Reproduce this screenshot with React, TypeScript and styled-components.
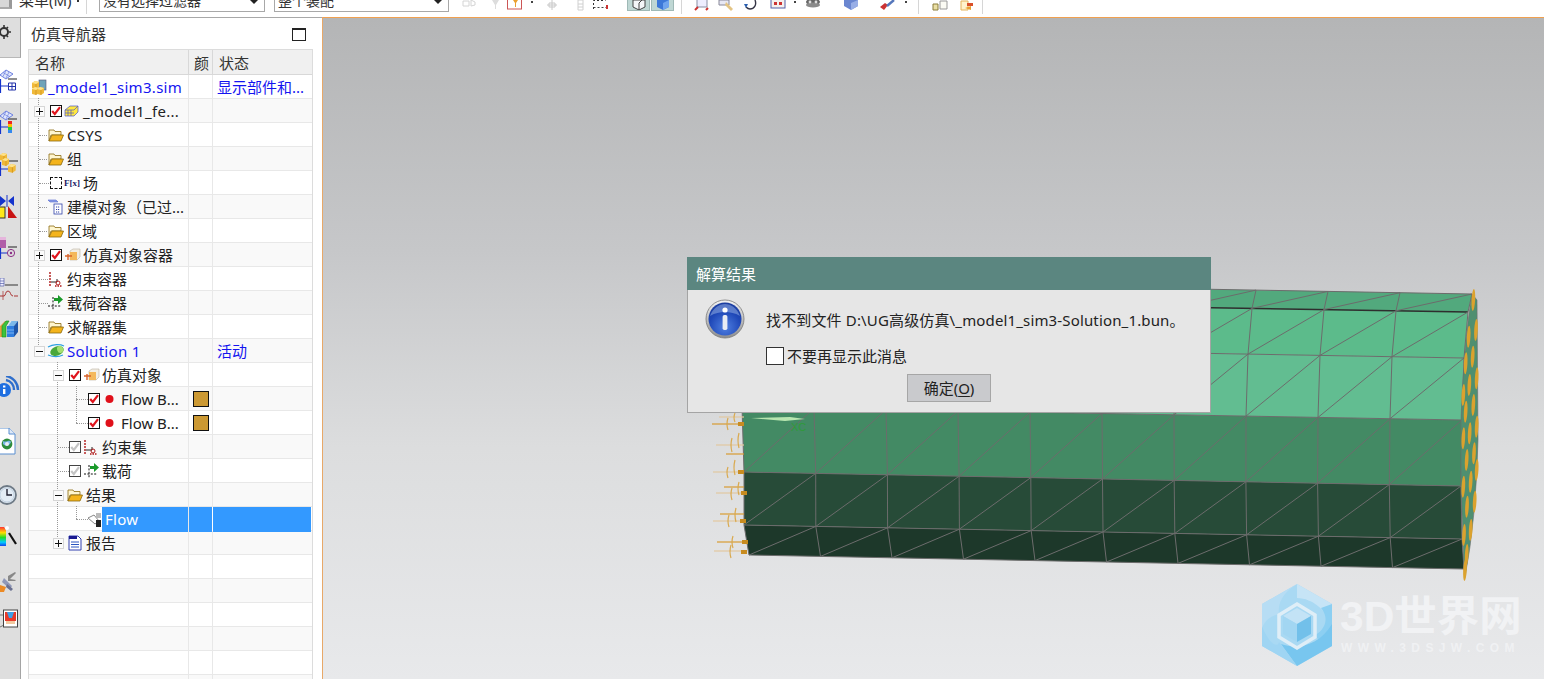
import React from 'react';
import styled, { createGlobalStyle } from 'styled-components';

const FONT = `"Noto Sans", "Noto Sans CJK SC", sans-serif`;

const Global = createGlobalStyle`
  html, body { margin: 0; padding: 0; height: 100%; overflow: hidden; background: #fff; }
  #root { height: 100%; }
  * { box-sizing: border-box; }
`;

const Page = styled.div`
  width: 1544px; height: 679px; display: flex; flex-direction: column; overflow: hidden;
  font-family: ${FONT}; font-size: 15px; color: #222;
`;

/* ---------- top toolbar ---------- */
const TopBar = styled.div`
  height: 17px; flex: none; display: flex; align-items: flex-start; background: #fff; overflow: hidden;
`;
const MenuText = styled.span`
  flex: none; width: 58px; margin: -10px 0 0 7px; font-size: 15px; line-height: 20px; white-space: nowrap; color: #333;
`;
const MenuLead = styled.div`
  flex: none; width: 12px; height: 9px; background: #d8d8d8; border-right: 3px solid #999; border-bottom: 2px solid #aaa;
`;
const MenuCaret = styled.span`
  flex: none; width: 2px; height: 2px; background: #333;
`;
const Sep = styled.div<{ $ml: number }>`
  width: 1px; height: 14px; flex: none; margin-left: ${p => p.$ml}px; background: #d6d6d6;
`;
const Select = styled.div<{ $w: number; $ml: number }>`
  position: relative; flex: none; width: ${p => p.$w}px; height: 12px; margin-left: ${p => p.$ml}px;
  border: 1px solid #a8a8a8; border-top: none; overflow: hidden; padding-left: 3px;
  font-size: 14px; line-height: 20px; color: #333;
  & > span { display: block; margin-top: -9px; white-space: nowrap; }
  &::after {
    content: ''; position: absolute; right: 6px; top: 0;
    border: 4px solid transparent; border-top-color: #222; border-bottom: none;
  }
`;
const ToolSvg = styled.svg<{ $ml: number }>`
  flex: none; margin-left: ${p => p.$ml}px; display: block;
`;
const Pressed = styled.div<{ $ml: number }>`
  flex: none; width: 23px; height: 11px; margin-left: ${p => p.$ml}px;
  background: #bfd7d4; border: 1px solid #9fb9b6; border-top: none;
  display: flex; justify-content: center;
`;

const Tool: React.FC<{ ml: number; w?: number; children: React.ReactNode }> = ({ ml, w = 16, children }) => (
  <ToolSvg $ml={ml} width={w} height={11} viewBox={`0 0 ${w} 11`}>{children}</ToolSvg>
);

const Toolbar = () => (
  <TopBar>
    <MenuLead />
    <MenuText>菜单(M)</MenuText>
    <MenuCaret />
    <Sep $ml={7} />
    <Select $w={166} $ml={12}><span>没有选择过滤器</span></Select>
    <Select $w={175} $ml={9}><span>整个装配</span></Select>
    <Tool ml={13}><path d="M1 1h6v5H1zM9 0l4 2v3l-4 1z" fill="none" stroke="#d4d4d4" /></Tool>
    <Tool ml={13} w={9}><path d="M1 0h7L5 5v4H4V5z" fill="#ddd" /></Tool>
    <Tool ml={7}><rect x=".5" y="-2" width="14" height="11" fill="#fff" stroke="#c55" /><path d="M6 0h5L9 3v4H8V3z" fill="#e9a030" /></Tool>
    <Tool ml={8} w={2}><rect y="1" width="2" height="2" fill="#444" /></Tool>
    <Tool ml={13} w={12}><path d="M6 0v10M1 5h10M3 3h6v4H3z" fill="none" stroke="#c8c8c8" /></Tool>
    <Tool ml={19} w={8}><path d="M1 0h5v10H1zM1 4h5M1 7h5" fill="none" stroke="#d0d0d0" /></Tool>
    <Tool ml={8}><path d="M.5 9V.5h12" fill="none" stroke="#333" strokeDasharray="2 2" /><path d="M.5 7.5h13" stroke="#444" strokeDasharray="2 2" /><path d="M13 5h2v4h-2z" fill="#c33" /></Tool>
    <Pressed $ml={18}><svg width="16" height="10" viewBox="0 0 16 10"><path d="M2 0v7l6 3 6-3V0z" fill="#f4f6f8" stroke="#444" /><path d="M8 10V3l3-3" fill="none" stroke="#444" /></svg></Pressed>
    <Pressed $ml={1}><svg width="16" height="10" viewBox="0 0 16 10"><path d="M2 0v7l6 3 6-3V0z" fill="#3d78d8" /><path d="M8 10V3l6-3v7z" fill="#6fa4ee" /></svg></Pressed>
    <Sep $ml={7} />
    <Tool ml={12}><rect x="3" y="-2" width="10" height="9" fill="#eef" stroke="#8a8fa5" /><path d="M1 10l3-3M12 10l2-2" stroke="#c33" strokeWidth="2" /></Tool>
    <Tool ml={8}><path d="M1 0h10v5H1z" fill="#e8e8f4" stroke="#889" /><path d="M8 2l7 7-2 2-6-6z" fill="#e3c484" /></Tool>
    <Tool ml={9}><path d="M12 0c2 5-1 9-5 9-2 0-3-1-4-2" fill="none" stroke="#334" strokeWidth="1.4" /><path d="M1 4l4 0-2 4z" fill="#2a5fb0" /></Tool>
    <Tool ml={11}><rect x="1" y="-1" width="14" height="9" fill="#f5f0ee" stroke="#5561a8" /><rect x="4" y="2" width="3" height="3" fill="#c33" /><rect x="9" y="2" width="3" height="3" fill="#c33" /></Tool>
    <Tool ml={8} w={2}><rect y="1" width="2" height="2" fill="#444" /></Tool>
    <Tool ml={9}><ellipse cx="8" cy="2" rx="7" ry="3.5" fill="#666" /><ellipse cx="8" cy="5" rx="7" ry="2.5" fill="#8a8a8a" /><circle cx="5" cy="2" r="1.4" fill="#ddd" /><circle cx="11" cy="2" r="1.4" fill="#ddd" /></Tool>
    <Tool ml={22}><path d="M1 0v6l7 4 7-4V0z" fill="#6a86d0" /><path d="M8 10V3l7-3v6z" fill="#98aee6" /></Tool>
    <Tool ml={20}><path d="M1 7l4 3 4-5-3-2z" fill="#c33" /><path d="M8 6l7-6" stroke="#5577bb" strokeWidth="2.4" /></Tool>
    <Tool ml={10} w={2}><rect y="1" width="2" height="2" fill="#444" /></Tool>
    <Sep $ml={11} />
    <Tool ml={13}><path d="M1 4h5v6H1z" fill="#eadfa4" stroke="#8a7c3a" /><path d="M8 1h7v8H8z" fill="#fbfbf4" stroke="#999" /></Tool>
    <Tool ml={11}><path d="M2 1h7v9H2z" fill="#fff3cc" stroke="#e3b45a" /><path d="M8 3h6v3H8z" fill="#d9502a" /><path d="M6 8l6-2v4z" fill="#e9a030" /></Tool>
    <Sep $ml={7} />
  </TopBar>
);

/* ---------- main split ---------- */
const Main = styled.div`
  flex: 1; min-height: 0; display: flex;
`;

/* ---------- left rail ---------- */
const Rail = styled.div`
  width: 21px; flex: none; display: flex; flex-direction: column; overflow: hidden;
  border-top: 1px solid #a8a8a8; background: #dedede;
`;
const RailSlot = styled.div<{ $h?: number; $pt?: number; $active?: boolean; $first?: boolean }>`
  flex: ${p => (p.$h ? 'none' : '1')}; height: ${p => (p.$h ? `${p.$h}px` : 'auto')}; padding-top: ${p => p.$pt || 0}px;
  background: ${p => (p.$active ? '#fff' : 'transparent')};
  border-right: 1px solid ${p => (p.$active ? '#fff' : '#a4a4a4')};
  border-bottom: ${p => (p.$first ? '1px solid #b8b8b8' : 'none')};
  overflow: hidden;
  & > svg { display: block; overflow: visible; }
`;
const RI: React.FC<{ children: React.ReactNode }> = ({ children }) => (
  <svg width="20" height="24" viewBox="0 0 20 24">{children}</svg>
);
const Lattice = () => (
  <g>
    <path d="M0 5l6-5 7 4-7 5z" fill="#dfe6fb" stroke="#6d80e0" />
    <path d="M3 2.5l7 4M6 0.5l-3 6M9 2l-3 6" stroke="#6d80e0" strokeWidth=".7" />
  </g>
);
const RailBlue = () => <path d="M0.5 9v14M0 16h8" stroke="#1433cc" strokeWidth="1.2" fill="none" />;
const GoldCube: React.FC<{ x: number; y: number; s?: number }> = ({ x, y, s = 1 }) => (
  <g transform={`translate(${x} ${y}) scale(${s})`}>
    <path d="M0 2l3-2 4 1v5l-3 2-4-1z" fill="#f0b93a" />
    <path d="M0 2l4 1 3-2-4-1z" fill="#ffe38a" />
    <path d="M4 3v5" stroke="#c78812" strokeWidth=".6" />
  </g>
);

const railIcons: React.ReactNode[] = [
  <RI key="g">
    <circle cx="4" cy="12" r="4" fill="none" stroke="#333" strokeWidth="2" />
    <path d="M4 5v3M4 16v3M9 12h2M8 7l-2 2M8 17l-2-2" stroke="#333" strokeWidth="1.6" />
  </RI>,
  <RI key="a"><Lattice /><path d="M8 9h9" stroke="#222" /><RailBlue />
    <path d="M8.5 13h7v7h-7zM8.5 16.5h7M12 13v7" fill="none" stroke="#2233aa" /></RI>,
  <RI key="b"><Lattice /><path d="M8 8h9" stroke="#222" /><RailBlue />
    <rect x="8" y="10" width="4" height="3" fill="#e22" /><rect x="8" y="13" width="4" height="3" fill="#fb0" />
    <rect x="8" y="16" width="4" height="3" fill="#2c4" /><rect x="8" y="19" width="4" height="3" fill="#38e" /></RI>,
  <RI key="c"><GoldCube x={0} y={0} /><GoldCube x={2} y={5} /><path d="M9 8h9" stroke="#222" /><RailBlue />
    <GoldCube x={8} y={11} s={1.1} /></RI>,
  <RI key="d"><path d="M0 1l6 5-6 5zM14 1L8 6l6 5z" fill="#1433cc" /><path d="M7 0v12" stroke="#1433cc" />
    <rect x="-1" y="12" width="6" height="11" fill="#ffe81a" stroke="#333" />
    <path d="M8 23V11l9 12z" fill="#c81414" /></RI>,
  <RI key="e"><path d="M0 2h6v10H0z" fill="#b05ea8" /><path d="M0 1h6v3H0z" fill="#e5b5dc" /><path d="M8 11h9" stroke="#222" />
    <path d="M.5 12v11M0 17h7" stroke="#1433cc" strokeWidth="1.2" />
    <circle cx="11" cy="17" r="3.6" fill="none" stroke="#8b2f86" /><circle cx="11" cy="17" r="1.2" fill="#8b2f86" /></RI>,
  <RI key="f"><path d="M0 0h4v8H0zM0 3h4M0 5.5h4" fill="#eef" stroke="#5560a8" strokeWidth=".7" /><path d="M5 7h13" stroke="#333" />
    <path d="M0 18h4c2 0 1-5 4-5s2 5 5 5M14 18h4" fill="none" stroke="#a33" /><path d="M3 13v9" stroke="#a33" strokeWidth=".7" /></RI>,
  <RI key="h"><path d="M0 6l5-5h1L2 6v11H0z" fill="#e8a040" /><path d="M2 6l4-5h3L6 6v11H2z" fill="#3cc33c" stroke="#1a8a1a" strokeWidth=".6" />
    <path d="M7 6l4-5h2L9 6v11H7z" fill="#f4f4f4" /><path d="M8 6l3.5-5H18l-4 5z" fill="#7bb8ea" /><path d="M7 6h7v11H7z" fill="#2f7ee0" /><path d="M14 6l4-5v11l-4 5z" fill="#1e55a8" /><path d="M7 10h7M7 13h7" stroke="#9cc8f5" strokeWidth=".7" /></RI>,
  <RI key="i"><circle cx="4" cy="14" r="7" fill="#1f6fe0" /><rect x="3" y="13" width="2.4" height="5" fill="#fff" /><rect x="3" y="9.5" width="2.4" height="2" fill="#fff" />
    <path d="M6 4c5 1 8 5 8 10M6 0c7 1 12 7 12 14" fill="none" stroke="#2f6fcc" strokeWidth="2.4" /></RI>,
  <RI key="j"><path d="M-2 0h11l6 6v20H-2z" fill="#fff" stroke="#5b8fd0" /><path d="M9 0v6h6" fill="#dde8f7" stroke="#5b8fd0" />
    <circle cx="7" cy="16" r="5.4" fill="#2e8c3c" /><path d="M3 13c3 2 6-2 8 1-2 5-6 4-8 2z" fill="#7ab8e8" /><circle cx="7" cy="16" r="2" fill="#e9eef5" /></RI>,
  <RI key="k"><circle cx="7" cy="12" r="9" fill="#e3ecf5" stroke="#6e7a86" strokeWidth="1.8" /><path d="M7 6v6h5" fill="none" stroke="#223" strokeWidth="1.4" /><circle cx="7" cy="12" r="7" fill="none" stroke="#a9bdd2" strokeWidth=".6" /></RI>,
  <RI key="l"><defs><linearGradient id="rb" x1="0" y1="0" x2="0" y2="1"><stop offset="0" stopColor="#f33" /><stop offset=".3" stopColor="#fd0" /><stop offset=".55" stopColor="#2d2" /><stop offset=".8" stopColor="#0cf" /><stop offset="1" stopColor="#14e" /></linearGradient></defs>
    <path d="M0 2h4l2 3v16H0z" fill="url(#rb)" /><path d="M9 8l7 11" stroke="#111" strokeWidth="2.2" /><circle cx="7" cy="3" r="2" fill="#fff" /></RI>,
  <RI key="m"><path d="M8 6l7-4 1 1-6 6 6 1-1 1-7 0z" fill="#888" /><path d="M4 8l8 8-2 3-8-7z" fill="#9098b8" /><path d="M0 15l6 2-2 5H0z" fill="#ec8a25" /><path d="M7 14l6 5-2 2-5-4z" fill="#6a7090" /></RI>,
  <RI key="n"><path d="M0 7h4M0 19l4-2" stroke="#777" /><rect x="3.5" y="2" width="14" height="17" fill="#fff" stroke="#444" />
    <rect x="5" y="4" width="11" height="9" fill="#e83a2a" /><path d="M7 4h7l-2 6H9z" fill="#3aa0e8" /><rect x="6" y="13" width="9" height="3" fill="#f2c9a0" /></RI>,
];
const railSlots: { h?: number; pt?: number; active?: boolean; first?: boolean }[] = [
  { h: 40, pt: 2, first: true }, { h: 45, pt: 12, active: true }, { h: 50, pt: 8 }, { h: 42 }, { h: 41 }, { h: 42 },
  { h: 42 }, { h: 56 }, { h: 52 }, { h: 55 }, { h: 42 }, { h: 45 }, { h: 38 }, {},
];

/* ---------- navigator ---------- */
const Nav = styled.div`
  width: 301px; flex: none; display: flex; flex-direction: column; background: #fff;
  border-top: 1px solid #a8a8a8; padding-left: 7px; overflow: hidden;
`;
const NavHead = styled.div`
  height: 31px; flex: none; display: flex; align-items: center; justify-content: space-between;
  padding: 0 16px 0 3px; font-size: 15px; color: #333;
`;
const MaxBtn = styled.div`
  width: 14px; height: 13px; margin-top: 2px; border: 1px solid #222; border-top-width: 2px; background: #fff;
`;
const Table = styled.div`
  width: 285px; flex: 1; border: 1px solid #dcdcdc; border-bottom: none; overflow: hidden;
`;
const HeadRow = styled.div`
  display: grid; grid-template-columns: 160px 24px 98px; height: 25px; background: #f0f0f0;
  border-bottom: 1px solid #d8d8d8;
`;
const HeadCell = styled.div<{ $pl: number }>`
  padding-left: ${p => p.$pl}px; border-right: 1px solid #d8d8d8; line-height: 26px; font-size: 15px; color: #333;
  overflow: hidden; white-space: nowrap;
  &:last-child { border-right: none; }
`;
const Row = styled.div<{ $alt: boolean }>`
  display: grid; grid-template-columns: 160px 24px 98px; height: 24px;
  background: ${p => (p.$alt ? '#f9f9f9' : '#fff')}; border-bottom: 1px solid #e8e8e8;
`;
const NameCell = styled.div`
  position: relative; display: flex; align-items: center; min-width: 0; white-space: nowrap;
  border-right: 1px solid #e8e8e8;
`;
const ColorCell = styled.div<{ $sel?: boolean }>`
  display: flex; align-items: center; justify-content: center;
  border-right: 1px solid ${p => (p.$sel ? '#fff' : '#e8e8e8')};
  background: ${p => (p.$sel ? '#3399ff' : 'transparent')};
`;
const StatusCell = styled.div<{ $sel?: boolean }>`
  padding-left: 4px; line-height: 25px; color: #1414f0; font-size: 15px; white-space: nowrap; overflow: hidden;
  background: ${p => (p.$sel ? '#3399ff' : 'transparent')};
`;
const Swatch = styled.div`
  width: 16px; height: 16px; background: #cc9933; border: 1px solid #111;
`;
const Label = styled.span<{ $ml: number; $blue?: boolean; $latin?: boolean }>`
  margin-left: ${p => p.$ml}px; padding-top: 1px; font-size: 15px; color: ${p => (p.$blue ? '#1414f0' : '#222')}; line-height: 23px;
  letter-spacing: ${p => (p.$latin ? '0.3px' : '0')};
`;
const SelLabel = styled.span`
  flex: 1; align-self: stretch; margin-left: 1px; padding-left: 3px; background: #3399ff; color: #fff;
  font-size: 15px; line-height: 25px; letter-spacing: 0.3px;
`;
const Expander = styled.div<{ $ml: number; $plus?: boolean }>`
  position: relative; flex: none; width: 11px; height: 11px; margin-left: ${p => p.$ml}px;
  background: #fbfbfb; border: 1px solid #d6d6d6; z-index: 1;
  &::before { content: ''; position: absolute; left: 1px; right: 1px; top: 4px; height: 1px; background: #111; }
  &::after {
    content: ''; position: absolute; top: 1px; bottom: 1px; left: 4px; width: 1px; background: #111;
    display: ${p => (p.$plus ? 'block' : 'none')};
  }
`;
const Elbow = styled.div<{ $ml: number; $w: number }>`
  flex: none; width: ${p => p.$w}px; margin-left: ${p => p.$ml}px; height: 0; border-top: 1px dotted #999;
`;
const VGuide = styled.div<{ $x: number; $half?: boolean }>`
  position: absolute; left: ${p => p.$x}px; top: -1px; height: ${p => (p.$half ? '13px' : '25px')};
  border-left: 1px dotted #999;
`;
const CheckBox = styled.div<{ $ml: number; $grey?: boolean; $none?: boolean }>`
  flex: none; width: 12px; height: 12px; margin-left: ${p => p.$ml}px; background: #fff;
  border: 1px ${p => (p.$none ? 'dashed' : 'solid')} ${p => (p.$grey ? '#444' : '#111')};
  & > svg { display: block; }
`;
const IconWrap = styled.svg<{ $ml: number }>`
  flex: none; margin-left: ${p => p.$ml}px; display: block; overflow: visible;
`;
const Fx = styled.span`
  flex: none; margin-left: 2px; font-family: "Liberation Serif", "DejaVu Serif", serif; font-weight: 700;
  font-size: 9px; color: #221a66; letter-spacing: 0;
`;

const Tick: React.FC<{ grey?: boolean }> = ({ grey }) => (
  <svg width="10" height="10" viewBox="0 0 10 10">
    <path d="M1.2 5l2.6 3L9 1.2" fill="none" stroke={grey ? '#c4c4c4' : '#e0141c'} strokeWidth="2.2" />
  </svg>
);
const Chk: React.FC<{ ml: number; grey?: boolean }> = ({ ml, grey }) => (
  <CheckBox $ml={ml} $grey={grey}><Tick grey={grey} /></CheckBox>
);
const Ico: React.FC<{ ml: number; w?: number; h?: number; children: React.ReactNode }> = ({ ml, w = 16, h = 16, children }) => (
  <IconWrap $ml={ml} width={w} height={h} viewBox={`0 0 ${w} ${h}`}>{children}</IconWrap>
);
const Folder: React.FC<{ ml: number }> = ({ ml }) => (
  <Ico ml={ml}>
    <path d="M1 3h5l1 1.5h6V8H3L1 14z" fill="#fff6cf" stroke="#8a6a10" strokeWidth=".8" />
    <path d="M1 14l3-6h11.5L13 14z" fill="#f4b41c" stroke="#8a6a10" strokeWidth=".8" />
  </Ico>
);
const SimObj: React.FC<{ ml: number }> = ({ ml }) => (
  <Ico ml={ml}>
    <path d="M5 4l3-2h7v8l-3 3H5z" fill="#f2eee4" stroke="#b8b0a0" strokeWidth=".6" />
    <path d="M5 5h7v8H5z" fill="#f4b85a" />
    <path d="M0 9h7M3 7v6" stroke="#d8622a" strokeWidth="1.4" />
  </Ico>
);
const Constraint: React.FC<{ ml: number }> = ({ ml }) => (
  <Ico ml={ml}>
    <path d="M2 1v14" stroke="#b01818" strokeWidth="1.4" strokeDasharray="2 1" />
    <path d="M3 11h6v-3" fill="none" stroke="#222" />
    <circle cx="10" cy="12" r="2" fill="none" stroke="#b01818" />
    <path d="M7 15h7" stroke="#b01818" strokeWidth="1.4" strokeDasharray="1.5 1" />
  </Ico>
);
const Load: React.FC<{ ml: number }> = ({ ml }) => (
  <Ico ml={ml}>
    <path d="M5 2v13M0 11h13" stroke="#111" strokeDasharray="2 1.4" />
    <path d="M6 3h4V0l5 4.5L10 9V6H6z" fill="#1a9a2a" />
  </Ico>
);

type Rd = { name: React.ReactNode; status?: string; swatch?: boolean; sel?: boolean };
const rows: Rd[] = [
  { name: <><Ico ml={2} w={16} h={16}><rect x="8" y="1" width="7" height="10" fill="#6fa3b8" stroke="#557" strokeWidth=".6" /><GoldCube x={1} y={2} /><GoldCube x={1} y={8} /><GoldCube x={6} y={8} /></Ico><Label $ml={1} $blue $latin>_model1_sim3.sim</Label></>, status: '显示部件和...' },
  { name: <><VGuide $x={9} /><Expander $ml={5} $plus /><Chk ml={5} /><Ico ml={3} w={14} h={12}><path d="M0 5l5-4h8v6l-4 4H0z" fill="#ffe840" stroke="#4a55c8" strokeWidth=".7" /><path d="M3 5v6M6 5v6M0 8h9M0 5h9l4-4" stroke="#4a55c8" strokeWidth=".7" fill="none" /></Ico><Label $ml={4} $latin>_model1_fe...</Label></> },
  { name: <><VGuide $x={9} /><Elbow $ml={10} $w={8} /><Folder ml={1} /><Label $ml={3} $latin>CSYS</Label></> },
  { name: <><VGuide $x={9} /><Elbow $ml={10} $w={8} /><Folder ml={1} /><Label $ml={3}>组</Label></> },
  { name: <><VGuide $x={9} /><Elbow $ml={10} $w={10} /><CheckBox $ml={1} $none /><Fx>F[x]</Fx><Label $ml={3}>场</Label></> },
  { name: <><VGuide $x={9} /><Elbow $ml={10} $w={8} /><Ico ml={0}><path d="M1 1h8l2 2H3z" fill="#8aa0e8" stroke="#5566cc" strokeWidth=".6" /><rect x="7" y="5" width="8" height="10" fill="#fff" stroke="#3344aa" strokeWidth=".8" /><path d="M9 8h4M9 10.5h4M9 13h4" stroke="#3344aa" strokeDasharray="1.2 .8" /></Ico><Label $ml={4}>建模对象（已过...</Label></> },
  { name: <><VGuide $x={9} /><Elbow $ml={10} $w={8} /><Folder ml={1} /><Label $ml={3}>区域</Label></> },
  { name: <><VGuide $x={9} /><Expander $ml={5} $plus /><Chk ml={5} /><SimObj ml={3} /><Label $ml={2}>仿真对象容器</Label></> },
  { name: <><VGuide $x={9} /><Elbow $ml={10} $w={9} /><Constraint ml={0} /><Label $ml={3}>约束容器</Label></> },
  { name: <><VGuide $x={9} /><Elbow $ml={10} $w={9} /><Load ml={0} /><Label $ml={3}>载荷容器</Label></> },
  { name: <><VGuide $x={9} /><Elbow $ml={10} $w={8} /><Folder ml={1} /><Label $ml={3}>求解器集</Label></> },
  { name: <><VGuide $x={9} $half /><Expander $ml={5} /><Ico ml={3} w={17} h={14}><path d="M0 3c5-3 12-3 16-1M0 11c5 2 11 2 15 0" fill="none" stroke="#30a0e0" strokeWidth="1.2" /><ellipse cx="9" cy="7" rx="7" ry="4.6" fill="#4aa83a" transform="rotate(-20 9 7)" /><ellipse cx="12" cy="5.4" rx="3" ry="3.6" fill="#a4e070" transform="rotate(-20 12 5)" /></Ico><Label $ml={2} $blue $latin>Solution 1</Label></>, status: '活动' },
  { name: <><VGuide $x={28} /><Expander $ml={24} /><Chk ml={5} /><SimObj ml={3} /><Label $ml={2}>仿真对象</Label></> },
  { name: <><VGuide $x={28} /><VGuide $x={47} /><Elbow $ml={47} $w={12} /><Chk ml={0} /><Ico ml={4} w={10} h={10}><circle cx="5.5" cy="5" r="4" fill="#e0101a" /></Ico><Label $ml={7}>Flow B...</Label></>, swatch: true },
  { name: <><VGuide $x={28} /><VGuide $x={47} $half /><Elbow $ml={47} $w={12} /><Chk ml={0} /><Ico ml={4} w={10} h={10}><circle cx="5.5" cy="5" r="4" fill="#e0101a" /></Ico><Label $ml={7}>Flow B...</Label></>, swatch: true },
  { name: <><VGuide $x={28} /><Elbow $ml={29} $w={11} /><Chk ml={0} grey /><Constraint ml={2} /><Label $ml={3}>约束集</Label></> },
  { name: <><VGuide $x={28} /><Elbow $ml={29} $w={11} /><Chk ml={0} grey /><Load ml={3} /><Label $ml={2}>载荷</Label></> },
  { name: <><VGuide $x={28} /><Expander $ml={24} /><Folder ml={3} /><Label $ml={3}>结果</Label></> },
  { name: <><VGuide $x={28} /><VGuide $x={47} $half /><Elbow $ml={47} $w={12} /><Ico ml={0} w={13} h={14}><path d="M0 5l6-3 5 6-4 3z" fill="#fff" stroke="#888" /><path d="M8 0h5v5h-5z" fill="#bbb" /><path d="M8 7h5v7H8z" fill="#222" /></Ico><SelLabel>Flow</SelLabel></>, sel: true },
  { name: <><VGuide $x={28} $half /><Expander $ml={24} $plus /><Ico ml={4} w={14} h={16}><path d="M1 1h9l3 3v11H1z" fill="#fff" stroke="#3340b0" /><path d="M1 1h8v3H1z" fill="#1a1a90" /><path d="M3 7h8M3 9.5h8M3 12h8" stroke="#2a55c0" /></Ico><Label $ml={4}>报告</Label></> },
  { name: null }, { name: null }, { name: null }, { name: null }, { name: null }, { name: null },
];

/* ---------- canvas ---------- */
const Canvas = styled.div`
  position: relative; flex: 1; min-width: 0; border-top: 1px solid #f0a050; border-left: 1px solid #e8a868;
  background: linear-gradient(180deg, #b4b5b6 0%, #c6c7c9 35%, #dcddde 65%, #e8e9eb 100%);
  overflow: hidden;
`;
const Scene = styled.svg`
  position: absolute; left: 0; top: 0; display: block;
`;
const Dialog = styled.div`
  position: absolute; left: 364px; top: 239px; width: 524px; height: 156px;
  display: flex; flex-direction: column; background: #e6e6e6; border: 1px solid #a4a4a4; border-top: none;
`;
const DialogTitle = styled.div`
  height: 33px; flex: none; margin: 0 -1px; padding-left: 9px; background: #5b8680; color: #fff;
  font-size: 15px; line-height: 34px;
`;
const DialogBody = styled.div`
  flex: 1; display: grid; grid-template-columns: 78px 1fr; padding-left: 0;
`;
const InfoCol = styled.div`
  padding: 9px 0 0 17px;
`;
const MsgCol = styled.div`
  display: flex; flex-direction: column; padding-top: 19px;
`;
const Message = styled.div`
  font-size: 15px; line-height: 22px; color: #222; white-space: nowrap; letter-spacing: 0.15px;
`;
const CheckLine = styled.label`
  display: flex; align-items: center; margin-top: 16px; font-size: 15px; line-height: 18px; color: #222;
`;
const BigCheck = styled.span`
  width: 18px; height: 18px; flex: none; margin-right: 3px; background: #fff; border: 1px solid #333;
`;
const OkButton = styled.div`
  align-self: flex-start; margin: 9px 0 0 141px; width: 84px; height: 28px; background: #c9cacd;
  border: 1px solid #a6a6a6; font-size: 15px; line-height: 27px; text-align: center; color: #222;
  & > u { text-underline-offset: 2px; }
`;
const Watermark = styled.div`
  position: absolute; left: 938px; top: 566px; display: flex; align-items: flex-start; pointer-events: none;
`;
const WmText = styled.div`
  margin-left: 7px; padding-top: 7px; display: flex; flex-direction: column; color: #f1f2f4;
`;
const WmMain = styled.div`
  font-family: "Liberation Sans", "Noto Sans CJK SC", sans-serif; font-weight: 700; font-size: 42.5px; line-height: 52px; height: 52px;
  white-space: nowrap;
`;
const WmSub = styled.div`
  font-family: "Liberation Sans", sans-serif; font-size: 12px; line-height: 12px; font-weight: 700; letter-spacing: 5.4px; white-space: nowrap;
  margin-top: -1px; padding-left: 1px; color: #f0f1f3;
`;

const lines = [
  [752, 281, 1472, 294], [748, 300, 1468, 312], [744, 345, 1464, 358], [742, 407, 1462, 420],
  [744, 472, 1461, 486], [744, 525, 1462, 539], [749, 555, 1464, 569],
];
const bandColors = ['#52a97d', '#5cbb8b', '#62bd91', '#438a64', '#274b38', '#1d382a'];
const N = 10;
const pt = (r: number, i: number): [number, number] => {
  const [a, b, c, d] = lines[r];
  return [a + ((c - a) * i) / N, b + ((d - b) * i) / N];
};
const capDots: [number, number][] = [
  [820, 60], [828, 150], [806, 170], [818, 230], [797, 250], [830, 295], [790, 345], [808, 315], [820, 375], [797, 395],
  [830, 440], [790, 475], [809, 460], [800, 540], [822, 520], [830, 570], [812, 605], [790, 620], [824, 665], [801, 680],
  [812, 750], [792, 765], [800, 825], [795, 870],
];
const arrows: [number, number][] = [[719, 417], [712, 424], [716, 445], [726, 454], [713, 472], [724, 487], [716, 493], [720, 514], [713, 521], [717, 542], [714, 551]];
const ticks: [number, number, number][] = [[735, 413, 422], [728, 418, 430], [739, 433, 448], [732, 438, 452], [735, 460, 475], [728, 467, 478], [739, 482, 495], [732, 488, 500], [736, 508, 522], [729, 515, 527], [733, 536, 548], [731, 545, 558]];
const blobs: [number, number][] = [[739, 424], [739, 472], [742, 493], [741, 521], [743, 542], [742, 552]];

const MeshScene = () => (
  <Scene width={1221} height={661} viewBox="323 18 1221 661">
    {bandColors.map((c, r) => (
      <polygon key={r} fill={c} points={`${pt(r, 0)} ${pt(r, N)} ${pt(r + 1, N)} ${pt(r + 1, 0)}`} />
    ))}
    <g stroke="#6c6c6c" strokeWidth="1" fill="none">
      {lines.map((_, r) => {
        const [a, b] = pt(r, 0); const [c, d] = pt(r, N);
        return <line key={r} x1={a} y1={b} x2={c} y2={d} stroke={r === 1 ? '#2e2e2e' : '#6c6c6c'} strokeWidth={r === 1 ? 1.6 : 1} />;
      })}
      {bandColors.map((_, r) => Array.from({ length: N + 1 }, (_, i) => {
        const [a, b] = pt(r, i); const [c, d] = pt(r + 1, i);
        const diag = i < N ? pt(r, i + 1) : null;
        return (
          <g key={`${r}-${i}`}>
            <line x1={a} y1={b} x2={c} y2={d} />
            {diag && <line x1={c} y1={d} x2={diag[0]} y2={diag[1]} />}
          </g>
        );
      }))}
    </g>
    <path d="M1472 294Q1464 340 1461 420L1461 486L1464 569L1465 577Q1476 520 1478 440L1477 300Z" fill="#4f8f70" stroke="#6c6c6c" strokeWidth=".6" />
    {capDots.map(([x, y], i) => (
      <ellipse key={i} cx={1200 + x / 3} cy={280 + y / 3} rx="1.8" ry="11" fill="#dba22e" transform={`rotate(3 ${1200 + x / 3} ${280 + y / 3})`} />
    ))}
    {arrows.map(([x, y], i) => <line key={i} x1={x} y1={y} x2="744" y2={y} stroke={i % 2 ? '#d89c32' : '#e2c8a0'} strokeWidth="1.2" />)}
    {ticks.map(([x, a, b], i) => <path key={i} d={`M${x} ${a}q-2 ${(b - a) / 2} 0 ${b - a}`} fill="none" stroke="#d9a94e" strokeWidth="1.2" />)}
    {blobs.map(([x, y], i) => <rect key={i} x={x - 1} y={y - 2} width="6" height="4" fill="#c88c20" />)}
    <path d="M751 418L790 417L805 419L785 421Z" fill="#b8e6b0" />
    <text x="791" y="431" fontSize="11" fontFamily="Liberation Sans, sans-serif" fill="#2f9a3a">XC</text>
  </Scene>
);

const InfoIcon = () => (
  <svg width="40" height="40" viewBox="0 0 40 40" style={{ display: 'block' }}>
    <defs>
      <radialGradient id="ig" cx=".5" cy=".75" r=".8">
        <stop offset="0" stopColor="#4f7fe0" /><stop offset=".6" stopColor="#1f48b8" /><stop offset="1" stopColor="#1a3a9a" />
      </radialGradient>
      <linearGradient id="ir" x1="0" y1="0" x2="0" y2="1"><stop offset="0" stopColor="#f4f4f4" /><stop offset="1" stopColor="#8e8e8e" /></linearGradient>
    </defs>
    <circle cx="20" cy="20" r="19" fill="url(#ir)" stroke="#777" strokeWidth=".8" />
    <circle cx="20" cy="20" r="16.5" fill="url(#ig)" />
    <path d="M5 17c3-8 9-12 15-12s12 4 15 12c-5-3-10-4-15-4s-10 1-15 4z" fill="#a8c4f0" opacity=".45" />
    <circle cx="20" cy="11" r="2.6" fill="#fff" />
    <rect x="17.6" y="16" width="4.8" height="15" rx="1.8" fill="#e8ecf4" />
  </svg>
);

const WmLogo = () => (
  <svg width="72" height="83" viewBox="0 0 72 83" style={{ display: 'block', flex: 'none' }}>
    <polygon points="36,0 71,20 71,62 36,82 1,62 1,20" fill="#a9d9f3" />
    <path d="M36 0L71 20V40C66 28 52 14 36 14Z" fill="#c6e4f6" />
    <path d="M71 20V62L52 52C62 48 70 36 60 24Z" fill="#8ccff2" />
    <path d="M71 62L36 82L20 60C36 66 58 62 71 40Z" fill="#78c6ef" />
    <path d="M36 82L1 62V42C6 56 16 66 18 58Z" fill="#9fd5f3" />
    <path d="M1 20L36 0C26 6 16 16 18 30C10 32 4 36 1 44Z" fill="#b7ddf4" />
    <polygon points="36,20 54,31 54,53 36,64 18,53 18,31" fill="none" stroke="#dfeef7" strokeWidth="3.5" />
    <polygon points="36,24 50,32 36,40 22,32" fill="#c3e3f6" />
    <polygon points="22,32 36,40 36,58 22,50" fill="#a2d6f2" />
    <polygon points="50,32 36,40 36,58 50,50" fill="#72c0ea" />
  </svg>
);

export default function App() {
  return (
    <Page>
      <Global />
      <Toolbar />
      <Main>
        <Rail>
          {railIcons.map((ic, i) => (
            <RailSlot key={i} $h={railSlots[i].h} $pt={railSlots[i].pt} $active={railSlots[i].active} $first={railSlots[i].first}>{ic}</RailSlot>
          ))}
        </Rail>
        <Nav>
          <NavHead><span>仿真导航器</span><MaxBtn /></NavHead>
          <Table>
            <HeadRow>
              <HeadCell $pl={6}>名称</HeadCell>
              <HeadCell $pl={5}>颜</HeadCell>
              <HeadCell $pl={6}>状态</HeadCell>
            </HeadRow>
            {rows.map((r, i) => (
              <Row key={i} $alt={i % 2 === 1}>
                <NameCell>{r.name}</NameCell>
                <ColorCell $sel={r.sel}>{r.swatch && <Swatch />}</ColorCell>
                <StatusCell $sel={r.sel}>{r.status}</StatusCell>
              </Row>
            ))}
          </Table>
        </Nav>
        <Canvas>
          <MeshScene />
          <Watermark>
            <WmLogo />
            <WmText>
              <WmMain>3D世界网</WmMain>
              <WmSub>WWW.3DSJW.COM</WmSub>
            </WmText>
          </Watermark>
          <Dialog>
            <DialogTitle>解算结果</DialogTitle>
            <DialogBody>
              <InfoCol><InfoIcon /></InfoCol>
              <MsgCol>
                <Message>找不到文件 D:\UG高级仿真\_model1_sim3-Solution_1.bun。</Message>
                <CheckLine><BigCheck />不要再显示此消息</CheckLine>
                <OkButton>确定(<u>O</u>)</OkButton>
              </MsgCol>
            </DialogBody>
          </Dialog>
        </Canvas>
      </Main>
    </Page>
  );
}
